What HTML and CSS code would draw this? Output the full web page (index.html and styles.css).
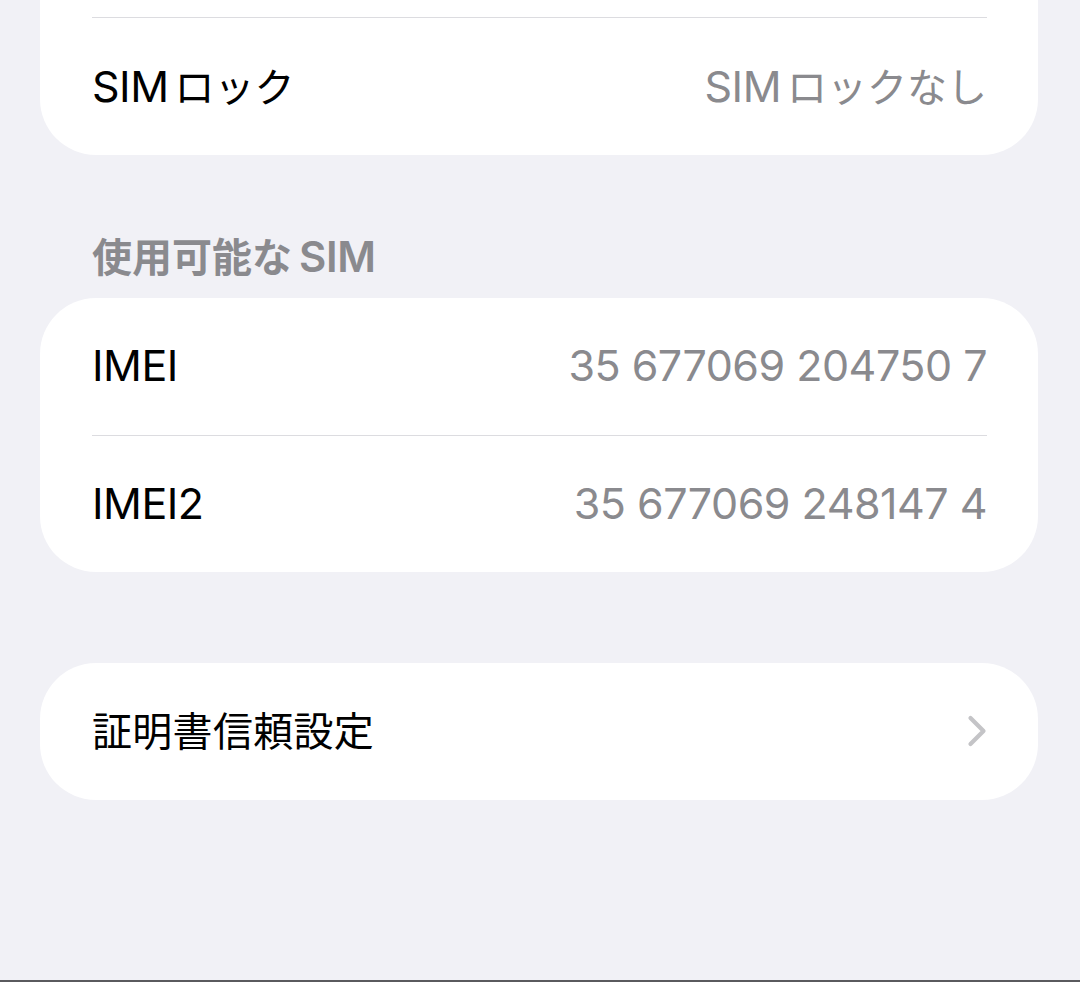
FILE: index.html
```html
<!DOCTYPE html>
<html lang="ja">
<head>
<meta charset="utf-8">
<title>情報</title>
<link rel="stylesheet" href="styles.css">
</head>
<body>
<div class="page">
  <section class="card card-cut">
    <div class="row">
      <span class="label">SIM<span class="ja ja-after">ロック</span></span>
      <span class="value">SIM<span class="ja ja-after">ロックなし</span></span>
    </div>
  </section>

  <h2 class="section-title"><span class="ja ja-before">使用可能な</span>SIM</h2>

  <section class="card">
    <div class="row">
      <span class="label">IMEI</span>
      <span class="value">35 677069 204750 7</span>
    </div>
    <div class="row">
      <span class="label">IMEI2</span>
      <span class="value">35 677069 248147 4</span>
    </div>
  </section>

  <section class="card card-link">
    <div class="row">
      <span class="label ja link-label">証明書信頼設定</span>
      <svg class="chevron" width="20" height="32" viewBox="0 0 20 32" aria-hidden="true">
        <path d="M3.5 3 L16.5 16 L3.5 29" fill="none" stroke="#c4c4c7" stroke-width="4.2" stroke-linecap="round" stroke-linejoin="round"/>
      </svg>
    </div>
  </section>

  <div class="bottom-bar"></div>
</div>
</body>
</html>
```

FILE: styles.css
```css
html, body {
  margin: 0;
  padding: 0;
}

body {
  background: #f1f1f6;
  font-family: "Inter", "Noto Sans CJK JP", sans-serif;
  color: #000;
  height: 982px;
  overflow: hidden;
}

.page {
  padding: 0 42px 0 40px;
}

.card {
  background: #fff;
  border-radius: 56px;
}

.card-cut {
  border-top-left-radius: 0;
  border-top-right-radius: 0;
  padding-top: 17px;
}

.row {
  box-sizing: border-box;
  height: 137px;
  margin: 0 51px 0 52px;
  display: flex;
  align-items: center;
  justify-content: space-between;
  font-size: 43px;
  letter-spacing: -0.5px;
  padding-bottom: 3px;
}

.row + .row {
  border-top: 1px solid #dcdce0;
}

.card-cut .row {
  height: 138px;
  border-top: 1px solid #dcdce0;
}

.label {
  color: #000;
}

.value {
  color: #8a8a8e;
}

.ja {
  font-family: "Noto Sans CJK JP", sans-serif;
  font-size: 40px;
  letter-spacing: 0;
}

.ja-after {
  margin-left: 6px;
}

.ja-before {
  margin-right: 7px;
}

.section-title {
  margin: 75px 0 16px 52px;
  font-size: 42px;
  line-height: 50px;
  font-weight: 600;
  color: #8a8a8e;
  letter-spacing: -0.3px;
}

.card-link {
  margin-top: 91px;
}

.card-link .row {
  padding-bottom: 0;
}

.link-label {
  padding-bottom: 6px;
  letter-spacing: 0.3px;
}

.chevron {
  display: block;
  margin-top: -2px;
}

.bottom-bar {
  margin: 180px -42px 0 -40px;
  height: 2px;
  background: #5a5a5e;
}
```
